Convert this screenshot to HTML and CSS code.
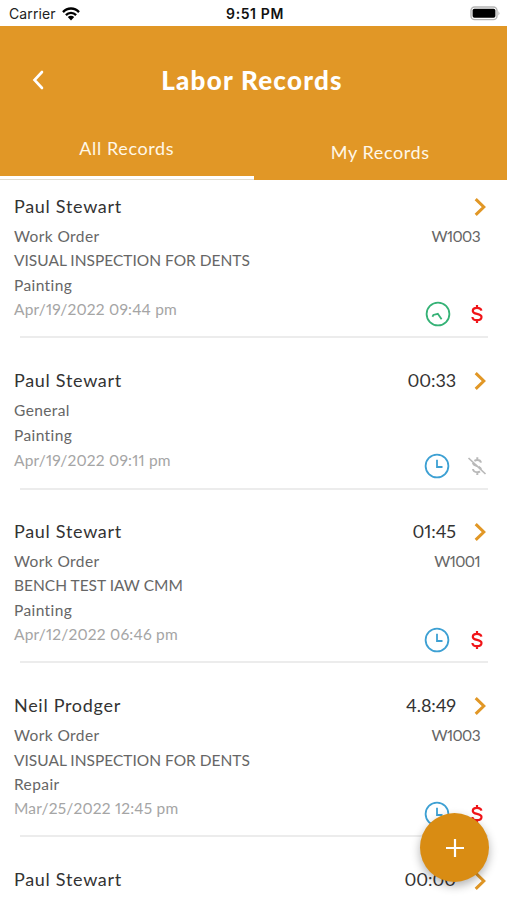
FILE: index.html
```
<!DOCTYPE html>
<html lang="en">
<head>
    <meta charset="UTF-8">
    <meta name="viewport" content="width=device-width, initial-scale=1.0">
    <title>Labor Records</title>
    <link rel="stylesheet" href="styles.css">
</head>
<body>
    <!-- Shared icons -->
    <svg class="icon-defs" width="0" height="0">
        <symbol id="chevron" viewBox="0 0 12 18">
            <path d="M1.7 1.2 L9.8 9 L1.7 16.8" fill="none" stroke="#e19726" stroke-width="3"/>
        </symbol>
        <symbol id="clock" viewBox="0 0 26 26">
            <circle cx="13" cy="13" r="11.4" fill="none" stroke="#3da0d3" stroke-width="1.8"/>
            <path d="M13 6.8 V14 H18.5" fill="none" stroke="#3da0d3" stroke-width="1.8"/>
        </symbol>
        <symbol id="clock-running" viewBox="0 0 26 26">
            <circle cx="13" cy="13" r="11.4" fill="none" stroke="#35b276" stroke-width="1.8"/>
            <path d="M7.4 15.8 L8.4 14 L12.8 12.8 L16.6 18.3" fill="none" stroke="#35b276" stroke-width="1.8"/>
        </symbol>
        <symbol id="dollar" viewBox="0 0 20 20">
            <path d="M10 1 V4 M10 16 V19 M14.4 6.6 C14 4.5 12.3 3.8 10 3.8 C7.5 3.8 5.8 5 5.8 6.9 C5.8 11.1 14.5 8.7 14.5 13.1 C14.5 15.1 12.6 16.2 10 16.2 C7.3 16.2 5.6 15 5.4 13" fill="none" stroke="#f01418" stroke-width="2.2"/>
        </symbol>
        <symbol id="dollar-off" viewBox="0 0 20 20">
            <path d="M10.3 1.2 V4 M10.3 16 V19 M14 6.6 C13.6 4.6 12 4 10.3 4 C9.2 4 8.2 4.3 7.4 4.8 M6 7 C6.2 9 8 9.6 10.2 10.1 M14.2 13.6 C14 12.4 13 11.5 11.5 10.7 M13 15.4 C12.2 16 11.3 16.2 10.3 16.2 C7.7 16.2 6.2 15 6 13" fill="none" stroke="#b9b9b9" stroke-width="2"/>
            <path d="M1.5 2 L18.5 18" stroke="#b9b9b9" stroke-width="1.7"/>
        </symbol>
    </svg>

    <div class="status-bar">
        <div class="carrier">
            <span>Carrier</span>
            <svg class="wifi" viewBox="0 0 18 14">
                <path d="M1 5.1 C5.4 .3 12.6 .3 17 5.1 M3.9 8.1 C6.7 5.2 11.3 5.2 14.1 8.1" fill="none" stroke="#000" stroke-width="2.3"/>
                <path d="M5.8 10.1 C7.6 8.4 10.4 8.4 12.2 10.1 L9 13.5 Z"/>
            </svg>
        </div>
        <span class="clock-time">9:51 PM</span>
        <svg class="battery" viewBox="0 0 30 15">
            <rect x="1" y="1" width="26" height="12.6" rx="3.6" fill="#fff" stroke="#b5b5b5" stroke-width="1.4"/>
            <rect x="2.6" y="2.8" width="22.8" height="9" rx="1.8"/>
            <path d="M28.5 5 Q30.2 7.3 28.5 9.6 Z" fill="#aaa"/>
        </svg>
    </div>

    <header class="header">
        <div class="title-bar">
            <svg class="back" viewBox="0 0 12 20">
                <path d="M10 2 L2.5 10 L10 18" fill="none" stroke="#fff" stroke-width="2.6" stroke-linecap="round"/>
            </svg>
            <h1>Labor Records</h1>
        </div>
        <nav class="tabs">
            <a class="tab active">All Records</a>
            <a class="tab">My Records</a>
        </nav>
    </header>

    <main class="records">
        <section class="record">
            <div class="row name-row">
                <h2>Paul Stewart</h2>
                <svg class="chevron"><use href="#chevron"/></svg>
            </div>
            <div class="row"><span>Work Order</span><span class="order">W1003</span></div>
            <div class="row caps">VISUAL INSPECTION FOR DENTS</div>
            <div class="row">Painting</div>
            <div class="row date-row">
                <span class="date">Apr/19/2022 09:44 pm</span>
                <div class="icons running">
                    <svg class="clock"><use href="#clock-running"/></svg>
                    <svg class="dollar"><use href="#dollar"/></svg>
                </div>
            </div>
        </section>

        <section class="record general">
            <div class="row name-row">
                <h2>Paul Stewart</h2>
                <span class="time">00:33</span>
                <svg class="chevron"><use href="#chevron"/></svg>
            </div>
            <div class="row">General</div>
            <div class="row">Painting</div>
            <div class="row date-row">
                <span class="date">Apr/19/2022 09:11 pm</span>
                <div class="icons">
                    <svg class="clock"><use href="#clock"/></svg>
                    <svg class="dollar"><use href="#dollar-off"/></svg>
                </div>
            </div>
        </section>

        <section class="record">
            <div class="row name-row">
                <h2>Paul Stewart</h2>
                <span class="time">01:45</span>
                <svg class="chevron"><use href="#chevron"/></svg>
            </div>
            <div class="row"><span>Work Order</span><span class="order">W1001</span></div>
            <div class="row caps">BENCH TEST IAW CMM</div>
            <div class="row">Painting</div>
            <div class="row date-row">
                <span class="date">Apr/12/2022 06:46 pm</span>
                <div class="icons">
                    <svg class="clock"><use href="#clock"/></svg>
                    <svg class="dollar"><use href="#dollar"/></svg>
                </div>
            </div>
        </section>

        <section class="record">
            <div class="row name-row">
                <h2>Neil Prodger</h2>
                <span class="time">4.8:49</span>
                <svg class="chevron"><use href="#chevron"/></svg>
            </div>
            <div class="row"><span>Work Order</span><span class="order">W1003</span></div>
            <div class="row caps">VISUAL INSPECTION FOR DENTS</div>
            <div class="row">Repair</div>
            <div class="row date-row">
                <span class="date">Mar/25/2022 12:45 pm</span>
                <div class="icons">
                    <svg class="clock"><use href="#clock"/></svg>
                    <svg class="dollar"><use href="#dollar"/></svg>
                </div>
            </div>
        </section>

        <section class="record last">
            <div class="row name-row">
                <h2>Paul Stewart</h2>
                <span class="time">00:00</span>
                <svg class="chevron"><use href="#chevron"/></svg>
            </div>
        </section>
    </main>

    <button class="add-button" aria-label="Add record">
        <svg viewBox="0 0 18 18"><path d="M9 0 V18 M0 9 H18" stroke="#fff" stroke-width="2.2"/></svg>
    </button>
</body>
</html>
```
FILE: styles.css
```
body {
    margin: 0;
    background-color: #fff;
    color: #666;
    font-family: Lato, sans-serif;
}
.icon-defs {
    display: block;
}
.status-bar {
    display: grid;
    grid-template-columns: 1fr auto 1fr;
    align-items: center;
    height: 26px;
    padding: 1px 7px 0 9px;
    box-sizing: border-box;
    font-family: Inter, sans-serif;
    font-size: 14px;
    color: #222;
}
.carrier {
    display: flex;
    align-items: center;
    gap: 6px;
    letter-spacing: 0.1px;
}
.wifi {
    width: 18px;
    height: 14px;
}
.clock-time {
    font-weight: 600;
    letter-spacing: 0.6px;
    margin-right: -1px;
    color: #111;
}
.battery {
    width: 30px;
    height: 15px;
    justify-self: end;
}
.header {
    height: 154px;
    background-color: #e19726;
    color: #fff;
}
.title-bar {
    display: grid;
    grid-template-columns: 32px 1fr 32px;
    align-items: center;
    height: 92px;
    padding: 16px 32px 0;
    box-sizing: border-box;
}
.back {
    width: 12px;
    height: 20px;
}
h1 {
    margin: 0;
    text-align: center;
    font-size: 26px;
    font-weight: 900;
    letter-spacing: 1.25px;
    line-height: 30px;
    padding-right: 3px;
}
.tabs {
    display: flex;
    height: 62px;
}
.tab {
    flex: 1;
    box-sizing: border-box;
    padding-top: 4px;
    text-align: center;
    font-size: 18px;
    letter-spacing: 0.6px;
    line-height: 60px;
    color: #fff8e8;
}
.tab.active {
    padding-top: 0;
    height: 61px;
    border-bottom: 3px solid #fff;
    box-shadow: 0 1px 0 #e2dccf;
}
.records {
    padding: 11px 21px 0 14px;
}
.record {
    height: 174.3px;
}
.record::after {
    content: "";
    display: block;
    height: 2px;
    margin: 14.2px -2px 0 6px;
    background-color: #ececec;
}
.record.general {
    height: 150.7px;
}
.record.general::after {
    margin-top: 15px;
}
.record.last {
    height: 30px;
}
.record.last::after {
    display: none;
}
.row {
    display: flex;
    justify-content: space-between;
    height: 24.4px;
    line-height: 24.4px;
    font-size: 15.5px;
    letter-spacing: 0.4px;
}
.general .row {
    height: 24.8px;
    line-height: 24.8px;
}
.caps {
    letter-spacing: 0;
}
.record .name-row {
    height: 30px;
    margin-bottom: 3px;
    align-items: center;
    color: #333;
}
.last .name-row {
    margin-bottom: 0;
}
h2 {
    flex: 1;
    margin: 0;
    font-size: 18px;
    font-weight: 400;
    letter-spacing: 0.7px;
}
.time {
    font-size: 18px;
    letter-spacing: -0.1px;
    font-variant-numeric: proportional-nums;
}
.chevron {
    width: 12px;
    height: 18px;
    margin: 2px 0 0 18px;
}
.order {
    margin-right: 6px;
    letter-spacing: -0.6px;
    font-variant-numeric: proportional-nums;
}
.date {
    color: #a5a5a5;
    letter-spacing: 0.2px;
    font-variant-numeric: proportional-nums;
}
.icons {
    display: flex;
    align-items: center;
    height: 26px;
    margin: 5px -1px 0 0;
    gap: 17px;
}
.clock {
    width: 26px;
    height: 26px;
}
.dollar {
    width: 20px;
    height: 20px;
}
.running {
    margin-top: 4px;
    gap: 16px;
}
.add-button {
    position: fixed;
    left: 420px;
    top: 813px;
    display: flex;
    align-items: center;
    justify-content: center;
    width: 69px;
    height: 69px;
    border: none;
    border-radius: 50%;
    background-color: #d98c13;
    box-shadow: 0 4px 10px rgba(0, 0, 0, 0.3);
}
.add-button svg {
    width: 18px;
    height: 18px;
}
```
